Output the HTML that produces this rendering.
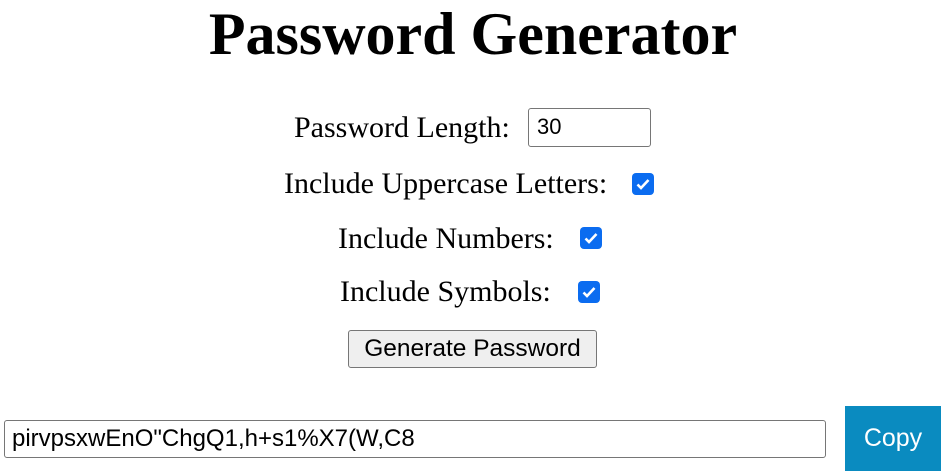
<!DOCTYPE html>
<html><head><meta charset="utf-8"><style>
body{margin:0;width:946px;height:475px;background:#fff;position:relative;overflow:hidden;font-family:"Liberation Serif",serif;color:#000}
.a{position:absolute;white-space:nowrap}
h1{position:absolute;margin:0;left:0;width:946px;text-align:center;top:1px;font-size:60px;font-weight:bold;line-height:66px}
.l{font-size:30px;line-height:34px}
.cb{position:absolute;width:22px;height:22px;background:#0b6cf0;border-radius:4px}
.cb svg{position:absolute;left:3px;top:3px}
.inp{position:absolute;border:1px solid #767676;border-radius:3px;box-sizing:border-box;font-family:"Liberation Sans",sans-serif;font-size:22px;color:#000;padding-left:8px;line-height:36px}
</style></head><body>
<h1>Password Generator</h1>
<div class="a l" style="left:294px;top:111px">Password Length:</div>
<div class="inp" style="left:528px;top:108px;width:123px;height:39px">30</div>
<div class="a l" style="left:284px;top:167px">Include Uppercase Letters:</div>
<div class="cb" style="left:632px;top:173px"><svg width="16" height="16" viewBox="0 0 16 16"><path d="M2.5 8.5l3.5 3.5 7.5-8" fill="none" stroke="#fff" stroke-width="2.6"/></svg></div>
<div class="a l" style="left:338px;top:222px">Include Numbers:</div>
<div class="cb" style="left:580px;top:227px"><svg width="16" height="16" viewBox="0 0 16 16"><path d="M2.5 8.5l3.5 3.5 7.5-8" fill="none" stroke="#fff" stroke-width="2.6"/></svg></div>
<div class="a l" style="left:340px;top:275px">Include Symbols:</div>
<div class="cb" style="left:578px;top:281px"><svg width="16" height="16" viewBox="0 0 16 16"><path d="M2.5 8.5l3.5 3.5 7.5-8" fill="none" stroke="#fff" stroke-width="2.6"/></svg></div>
<div class="a" style="left:348px;top:330px;width:249px;height:38px;box-sizing:border-box;border:1px solid #767676;border-radius:3px;background:#efefef;font-family:'Liberation Sans',sans-serif;font-size:24.5px;line-height:36px;text-align:center">Generate Password</div>
<div class="inp" style="left:4px;top:420px;width:822px;height:38px;padding-left:7px;font-size:24px">pirvpsxwEnO"ChgQ1,h+s1%X7(W,C8</div>
<div class="a" style="left:845px;top:406px;width:96px;height:65px;background:#0a8bc0;color:#fff;font-family:'Liberation Sans',sans-serif;font-size:25px;line-height:65px;text-align:center">Copy</div>
</body></html>
